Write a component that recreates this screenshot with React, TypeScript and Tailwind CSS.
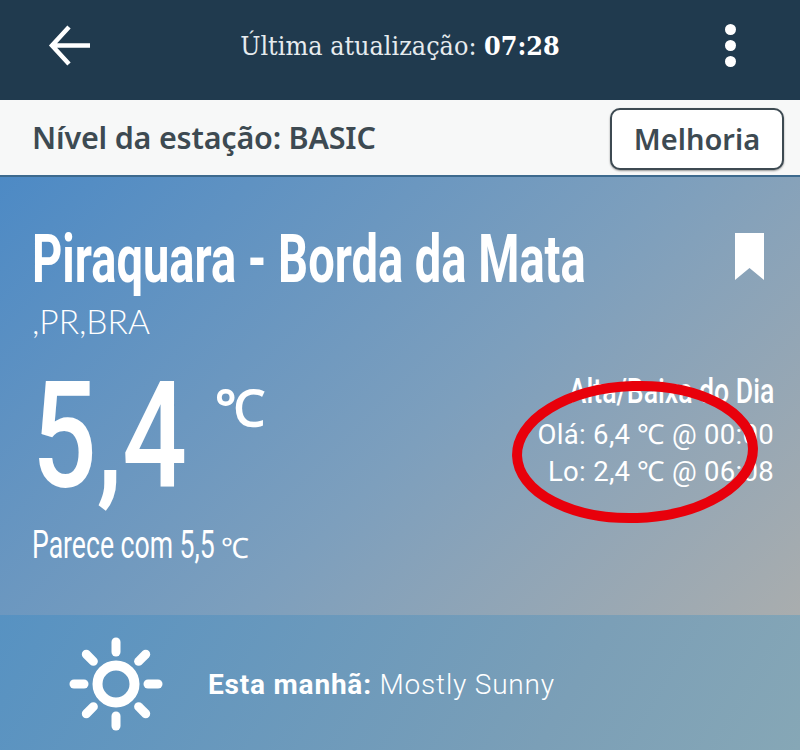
import React from "react";

const display = "font-['Roboto','Liberation_Sans',sans-serif] whitespace-nowrap";

function SunIcon() {
  const rays = [0, 45, 90, 135, 180, 225, 270, 315];
  return (
    <svg width="96" height="96" viewBox="0 0 96 96" className="shrink-0">
      <circle cx="48" cy="48" r="18.500" fill="none" stroke="#fff" strokeWidth="10" />
      {rays.map((a) => (
        <line
          key={a}
          x1="48"
          y1="6"
          x2="48"
          y2="16"
          stroke="#fff"
          strokeWidth="9"
          strokeLinecap="round"
          transform={`rotate(${a} 48 48)`}
        />
      ))}
    </svg>
  );
}

export default function App() {
  return (
    <div className="relative w-[800px] h-[750px] overflow-hidden font-['Noto_Sans',sans-serif]">
      {/* App bar */}
      <header className="h-[100px] bg-[#203a4e] grid grid-cols-[1fr_auto_1fr] items-center text-white">
        <div className="pl-[48px] -mt-[10px]">
          <svg width="44" height="44" viewBox="0 0 44 44" fill="none" stroke="#fff" strokeWidth="4.500" className="block">
            <path d="M42 22.500H5M21 4L4 22.500L21 41" />
          </svg>
        </div>
        <div className="font-['DejaVu_Serif_Condensed','DejaVu_Serif',serif] text-[26.700px] -mt-[8px] text-[#e6ebee] whitespace-nowrap">
          Última atualização: <b className="text-white">07:28</b>
        </div>
        <div className="flex flex-col items-end gap-[5px] pr-[64px] -mt-[10px]">
          <span className="w-[11px] h-[11px] rounded-full bg-white" />
          <span className="w-[11px] h-[11px] rounded-full bg-white" />
          <span className="w-[11px] h-[11px] rounded-full bg-white" />
        </div>
      </header>

      {/* Station level */}
      <div className="h-[77px] bg-[#f7f8f8] flex items-center justify-between pl-[32px] pr-[16px] border-b-2 border-[#3d6a8e]">
        <span className="text-[30.500px] font-semibold text-[#3d4a52] tracking-[-0.2px] mt-[1px]">Nível da estação: BASIC</span>
        <button className="w-[174px] h-[62px] rounded-[10px] bg-white border-2 border-[#3d4a52] text-[29px] font-semibold text-[#3d4a52] mt-[2px] shadow-[0_1px_2px_rgba(0,0,0,0.4)]">
          Melhoria
        </button>
      </div>

      {/* Current conditions */}
      <section className="h-[438px] bg-[linear-gradient(135deg,#4d8ac5_0%,#7d9fbd_55%,#a9adae_100%)] text-white pl-[32px] pr-[26px] pt-[43px] flex flex-col">
        <div className="flex items-start">
          <h1 className={`${display} flex-1 min-w-0 origin-left scale-x-[.713] text-[66px] leading-[80px] font-bold`}>
            Piraquara - Borda da Mata
          </h1>
          <svg width="29" height="47" viewBox="0 0 29 47" className="mt-[13px] mr-[10px] shrink-0">
            <path d="M0 0H29V47L14.500 35L0 47Z" fill="#fff" />
          </svg>
        </div>
        <div className="font-['Lato',sans-serif] font-light text-[33.500px] leading-[40px] mt-[1px]">,PR,BRA</div>
        <div className="flex justify-between mt-[28px]">
          <div className="flex flex-col">
            <div className="flex items-start">
              <span className={`${display} w-[150px] origin-left scale-x-[.77] text-[148px] leading-[136px] font-medium`}>5,4</span>
              <span className="font-['Lato',sans-serif] text-[50px] leading-[50px] font-bold ml-[33px] mt-[13px]">℃</span>
            </div>
            <div className="flex items-baseline mt-[18px]">
              <span className={`${display} w-[183px] origin-left scale-x-[.7] text-[38px] leading-[44px]`}>Parece com 5,5</span>
              <span className="font-['Lato',sans-serif] font-light text-[28px] ml-[6px]">℃</span>
            </div>
          </div>
          <div className="flex flex-col items-end mt-[3px]">
            <div className={`${display} origin-right scale-x-[.76] text-[35px] leading-[40px] font-medium`}>Alta/Baixa do Dia</div>
            <div className="font-['Roboto',sans-serif] text-[27.500px] leading-[37px] tracking-[0.3px] mt-[4px]">Olá: 6,4 ℃ @ 00:00</div>
            <div className="font-['Roboto',sans-serif] text-[27.500px] leading-[37px] tracking-[0.3px]">Lo: 2,4 ℃ @ 06:08</div>
          </div>
        </div>
      </section>

      {/* Forecast row */}
      <section className="h-[135px] bg-[linear-gradient(120deg,#5792c2_0%,#7b9fb7_70%,#86a7b6_100%)] text-white flex items-center pl-[68px] gap-[44px] pt-[2px]">
        <SunIcon />
        <div className="font-['Roboto',sans-serif] text-[28px] tracking-[0.8px] mt-[2px]">
          <b className="font-bold">Esta manhã:</b> <span className="font-light">Mostly Sunny</span>
        </div>
      </section>

      {/* Hand-drawn highlight */}
      <svg className="absolute left-[500px] top-[370px]" width="280" height="165" viewBox="0 0 280 165" fill="none">
        <ellipse cx="135" cy="82" rx="118" ry="66" stroke="#e8000b" strokeWidth="10" transform="rotate(-2 135 82)" />
      </svg>
    </div>
  );
}
